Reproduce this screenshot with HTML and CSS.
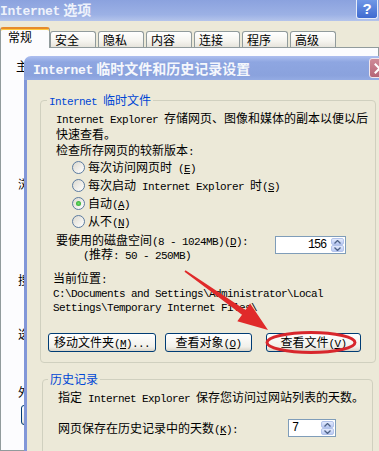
FILE: index.html
```html
<!DOCTYPE html>
<html lang="zh-CN">
<head>
<meta charset="utf-8">
<title>Internet 选项</title>
<link rel="stylesheet" href="styles.css">
</head>
<body>
<div class="win">
  <div class="titlebar">
    <span class="wtitle"><span class="en">Internet</span> 选项</span>
    <span class="help">?</span>
  </div>
  <div class="tabs">
    <div class="tab sel">常规</div>
    <div class="tab">安全</div>
    <div class="tab">隐私</div>
    <div class="tab">内容</div>
    <div class="tab">连接</div>
    <div class="tab">程序</div>
    <div class="tab">高级</div>
  </div>
  <div class="panel">
    <div class="ghead g1">主页</div>
    <div class="ghead g2">浏览历史记录</div>
    <div class="ghead g3">搜索</div>
    <div class="ghead g4">选项卡</div>
    <div class="ghead g5">外观</div>
    <div class="pbtn"></div>
  </div>

  <div class="dlg">
    <div class="dtitle">
      <span class="dtext"><span class="en">Internet</span> 临时文件和历史记录设置</span>
      <span class="close"><svg width="11" height="11" viewBox="0 0 11 11"><path d="M1.5 1.5 L9.5 9.5 M9.5 1.5 L1.5 9.5" stroke="#fff" stroke-width="2" stroke-linecap="square"/></svg></span>
    </div>
    <div class="dbody">
      <fieldset class="grp grp1">
        <legend><span class="en">Internet </span>临时文件</legend>
        <div class="gin">
          <p class="desc"><span class="en">Internet Explorer </span>存储网页、图像和媒体的副本以便以后<br>快速查看。<br>检查所存网页的较新版本<span class="en">:</span></p>
          <div class="radios">
            <div class="radio"><span class="rb"></span><span class="rt">每次访问网页时<span class="en"> (<u>E</u>)</span></span></div>
            <div class="radio"><span class="rb"></span><span class="rt">每次启动<span class="en"> Internet Explorer </span>时<span class="en">(<u>S</u>)</span></span></div>
            <div class="radio"><span class="rb on"></span><span class="rt">自动<span class="en">(<u>A</u>)</span></span></div>
            <div class="radio"><span class="rb"></span><span class="rt">从不<span class="en">(<u>N</u>)</span></span></div>
          </div>
          <div class="disk">
            <div class="disktext">
              <div>要使用的磁盘空间<span class="en">(8 - 1024MB)(<u>D</u>):</span></div>
              <div class="rec"><span class="en">(</span>推荐<span class="en">: 50 - 250MB)</span></div>
            </div>
            <div class="spin s1">
              <span class="val en">156</span>
              <span class="sb">
                <i><svg width="7" height="4" viewBox="0 0 7 4"><path d="M0.5 3.5 L3.5 0.5 L6.5 3.5" fill="none" stroke="#4d6185" stroke-width="1.3"/></svg></i>
                <i><svg width="7" height="4" viewBox="0 0 7 4"><path d="M0.5 0.5 L3.5 3.5 L6.5 0.5" fill="none" stroke="#4d6185" stroke-width="1.3"/></svg></i>
              </span>
            </div>
          </div>
          <div class="loc">
            <div>当前位置<span class="en">:</span></div>
            <div class="path en">C:\Documents and Settings\Administrator\Local<br>Settings\Temporary Internet Files\</div>
          </div>
          <div class="btns">
            <div class="btn b1">移动文件夹<span class="en">(<u>M</u>)...</span></div>
            <div class="btn b2">查看对象<span class="en">(<u>O</u>)</span></div>
            <div class="btn b3">查看文件<span class="en">(<u>V</u>)</span></div>
          </div>
        </div>
      </fieldset>

      <fieldset class="grp grp2">
        <legend>历史记录</legend>
        <div class="gin2">
          <p class="hdesc">指定<span class="en"> Internet Explorer </span>保存您访问过网站列表的天数。</p>
          <div class="days">
            <span class="dlabel">网页保存在历史记录中的天数<span class="en">(<u>K</u>):</span></span>
            <div class="spin s2">
              <span class="val en">7</span>
              <span class="sb">
                <i><svg width="7" height="4" viewBox="0 0 7 4"><path d="M0.5 3.5 L3.5 0.5 L6.5 3.5" fill="none" stroke="#4d6185" stroke-width="1.3"/></svg></i>
                <i><svg width="7" height="4" viewBox="0 0 7 4"><path d="M0.5 0.5 L3.5 3.5 L6.5 0.5" fill="none" stroke="#4d6185" stroke-width="1.3"/></svg></i>
              </span>
            </div>
          </div>
        </div>
      </fieldset>
    </div>
  </div>

  <svg class="annot" width="379" height="451" viewBox="0 0 379 451">
    <ellipse cx="311" cy="342.5" rx="44" ry="10" fill="none" stroke="#d8262c" stroke-width="3"/>
    <polygon points="185.5,270.3 245.5,310 250.1,303.5 268,330 237.3,321.3 242,314.8 184.5,271.7" fill="#e02a2a"/>
  </svg>
</div>
</body>
</html>
```

FILE: styles.css
```css
* { box-sizing: border-box; }
html, body { margin: 0; padding: 0; }
body {
  width: 379px;
  height: 451px;
  overflow: hidden;
  background: #ece9d8;
  font-family: "Noto Sans CJK SC", "Noto Sans", sans-serif;
  font-size: 12px;
  color: #000;
}
.en {
  font-family: "Liberation Mono", "DejaVu Sans Mono", monospace;
  font-size: 11px;
  letter-spacing: -0.6px;
  line-height: 10px;
  white-space: pre;
}
.win {
  position: relative;
  width: 379px;
  height: 451px;
  overflow: hidden;
  background: #ece9d8;
}

/* outer window title */
.titlebar {
  height: 21px;
  display: flex;
  justify-content: space-between;
  align-items: flex-start;
  background: linear-gradient(#8ba2de, #9cb1e5 70%, #b4c4eb);
}
.wtitle {
  color: #eef2fb;
  font-weight: bold;
  font-size: 14px;
  line-height: 18px;
}
.wtitle .en { font-size: 13px; letter-spacing: -0.3px; }
.help {
  width: 22px;
  height: 19px;
  margin-right: 1px;
  border: 1px solid #e6ecf8;
  border-top: none;
  border-radius: 0 0 3px 3px;
  background: linear-gradient(#7098e6, #3f6bd0);
  color: #fff;
  font: bold 15px/18px "Liberation Sans", sans-serif;
  text-align: center;
}

/* tabs */
.tabs {
  height: 26px;
  display: flex;
  align-items: flex-end;
}
.tab {
  width: 46px;
  height: 16px;
  margin-left: 2px;
  padding-left: 4px;
  line-height: 15px;
  border: 1px solid #919b9c;
  border-bottom: none;
  border-radius: 3px 3px 0 0;
  background: linear-gradient(#ffffff, #f5f4ef 60%, #e6e4dc);
}
.tab.sel {
  width: 50px;
  height: 21px;
  margin-left: 0;
  margin-right: -2px;
  margin-bottom: -1px;
  padding-left: 7px;
  line-height: 16px;
  position: relative;
  z-index: 1;
  background: #fcfcfe;
  border-top: 2px solid #e68b2c;
  box-shadow: inset 0 1px 0 #ffc83c;
}

/* underlying panel (only its left strip shows) */
.panel {
  height: 404px;
  border: 1px solid #919b9c;
  background: #fcfcfe;
  padding-top: 12px;
}
.ghead {
  line-height: 12px;
  height: 12px;
  margin-left: 17px;
  width: 7px;
  overflow: hidden;
  white-space: nowrap;
}
.g1 { margin-left: 15px; width: 9px; }
.g2 { margin-top: 106px; }
.g3 { margin-top: 84px; }
.g4 { margin-top: 42px; }
.g5 { margin-top: 46px; }
.pbtn {
  margin: 7px 0 0 20px;
  width: 60px;
  height: 20px;
  border: 1px solid #003c74;
  border-radius: 3px;
  background: linear-gradient(#fff, #ecebe6 85%, #d6d0c5);
}

/* dialog */
.dlg {
  position: absolute;
  left: 24px;
  top: 56px;
  width: 372px;
  height: 400px;
}
.dtitle {
  height: 24px;
  border-radius: 7px 7px 0 0;
  background: linear-gradient(#aebff0, #8ea6e1 25%, #8aa2dd 80%, #94abe3);
  display: flex;
  align-items: center;
  justify-content: space-between;
  padding-left: 9px;
}
.dtext {
  color: #f5f7fc;
  font-weight: bold;
  font-size: 14px;
  line-height: 18px;
  white-space: nowrap;
}
.dtext .en { font-size: 13px; letter-spacing: -0.3px; }
.close {
  width: 21px;
  height: 20px;
  margin-right: 6px;
  border: 1px solid #f2e6ea;
  border-radius: 3px;
  background: linear-gradient(#cf8b98, #b56577);
  display: flex;
  align-items: center;
  justify-content: center;
}
.dbody {
  height: 376px;
  background: #ece9d8;
  border-left: 3px solid #8297d8;
  padding: 13px 0 0 13px;
}

/* group boxes */
.grp {
  margin: 0;
  padding: 0;
  border: 1px solid #d0d0bf;
  border-radius: 4px;
  min-width: 0;
}
.grp legend {
  padding: 0 2px;
  margin-left: 6px;
  color: #0046d5;
  line-height: 14px;
}
.grp1 { width: 336px; }
.gin { padding: 3px 10px 10px 15px; white-space: nowrap; }
.desc { margin: 0; line-height: 16px; }
.radios { padding-left: 16px; }
.radio {
  height: 18px;
  display: flex;
  align-items: center;
}
.rt { line-height: 14px; white-space: nowrap; }
.rb {
  width: 13px;
  height: 13px;
  margin-right: 3px;
  border-radius: 50%;
  border: 1px solid #5b7ba0;
  background: linear-gradient(135deg, #dcd9cf, #ffffff);
  display: inline-flex;
  align-items: center;
  justify-content: center;
  flex: none;
}
.rb.on::after {
  content: "";
  width: 5px;
  height: 5px;
  border-radius: 50%;
  background: radial-gradient(#6ee06e, #1f9a1f);
}
.disk {
  margin-top: 3px;
  display: flex;
  align-items: flex-start;
  line-height: 14px;
}
.disktext { width: 219px; }
.rec { padding-left: 27px; }
.spin {
  display: flex;
  height: 18px;
  border: 1px solid #7f9db9;
  background: #fff;
}
.spin .val { flex: 1; line-height: 16px; font-size: 12px; letter-spacing: -1.2px; }
.s1 { width: 71px; margin-top: 3px; }
.s1 .val { text-align: right; padding-right: 4px; }
.s2 { width: 48px; }
.s2 .val { padding-left: 3px; }
.sb {
  width: 15px;
  display: flex;
  flex-direction: column;
  padding: 1px;
}
.sb i {
  flex: 1;
  display: flex;
  align-items: center;
  justify-content: center;
  background: linear-gradient(#e3eafc, #b9c9f3);
  border: 1px solid #b3c3eb;
  border-radius: 2px;
}
.loc { margin: 10px 0 0 -3px; line-height: 14px; }
.path { display: block; margin-top: 2px; line-height: 14px; }
.btns {
  display: flex;
  margin: 18px 0 0 -8px;
}
.btn {
  height: 19px;
  border: 1px solid #003c74;
  border-radius: 3px;
  background: linear-gradient(#ffffff, #f1f0ea 75%, #d9d4c8);
  text-align: center;
  line-height: 16px;
}
.b1 { width: 108px; margin-right: 9px; }
.b2 { width: 87px; margin-right: 14px; }
.b3 { width: 95px; }

.grp2 { width: 331px; margin: 9px 0 0 2px; }
.grp2 legend { margin-left: 5px; }
.gin2 { padding: 4px 10px 20px 15px; white-space: nowrap; }
.hdesc { margin: 0; line-height: 14px; }
.days {
  margin-top: 15px;
  display: flex;
  align-items: center;
  height: 18px;
}
.dlabel { width: 230px; line-height: 14px; }

/* red annotation drawn over the dialog */
.annot {
  position: absolute;
  left: 0;
  top: 0;
  pointer-events: none;
}
```
